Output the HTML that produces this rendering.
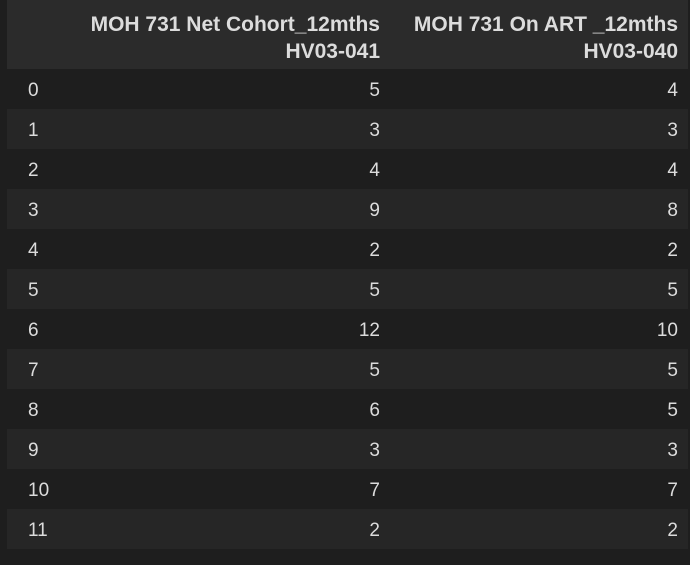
<!DOCTYPE html>
<html><head><style>
body{margin:0;background:#1e1e1e;width:690px;height:565px;overflow:hidden;font-family:"Liberation Sans",sans-serif;color:#dcdcdc;}
table{position:absolute;left:7px;top:0;width:681px;border-collapse:collapse;font-size:19px;table-layout:fixed;}
th{background:#2b2b2b;font-weight:bold;text-align:right;height:69px;box-sizing:border-box;padding:6px 10px 0 0;line-height:27px;color:#dcdcdc;font-size:21px;}
td{height:40px;box-sizing:border-box;padding:4px 10px 0 0;text-align:right;}
td.i{text-align:left;padding-left:21px;padding-right:0}
tr:nth-child(even) td{background:#262626;}
tr:nth-child(odd) td{background:#1e1e1e;}
</style></head><body>
<table>
<colgroup><col style="width:50px"><col style="width:333px"><col></colgroup>
<thead><tr><th></th><th>MOH 731 Net Cohort_12mths<br>HV03-041</th><th>MOH 731 On ART _12mths<br>HV03-040</th></tr></thead>
<tbody>
<tr><td class="i">0</td><td>5</td><td>4</td></tr>
<tr><td class="i">1</td><td>3</td><td>3</td></tr>
<tr><td class="i">2</td><td>4</td><td>4</td></tr>
<tr><td class="i">3</td><td>9</td><td>8</td></tr>
<tr><td class="i">4</td><td>2</td><td>2</td></tr>
<tr><td class="i">5</td><td>5</td><td>5</td></tr>
<tr><td class="i">6</td><td>12</td><td>10</td></tr>
<tr><td class="i">7</td><td>5</td><td>5</td></tr>
<tr><td class="i">8</td><td>6</td><td>5</td></tr>
<tr><td class="i">9</td><td>3</td><td>3</td></tr>
<tr><td class="i">10</td><td>7</td><td>7</td></tr>
<tr><td class="i">11</td><td>2</td><td>2</td></tr>
</tbody></table>
</body></html>
